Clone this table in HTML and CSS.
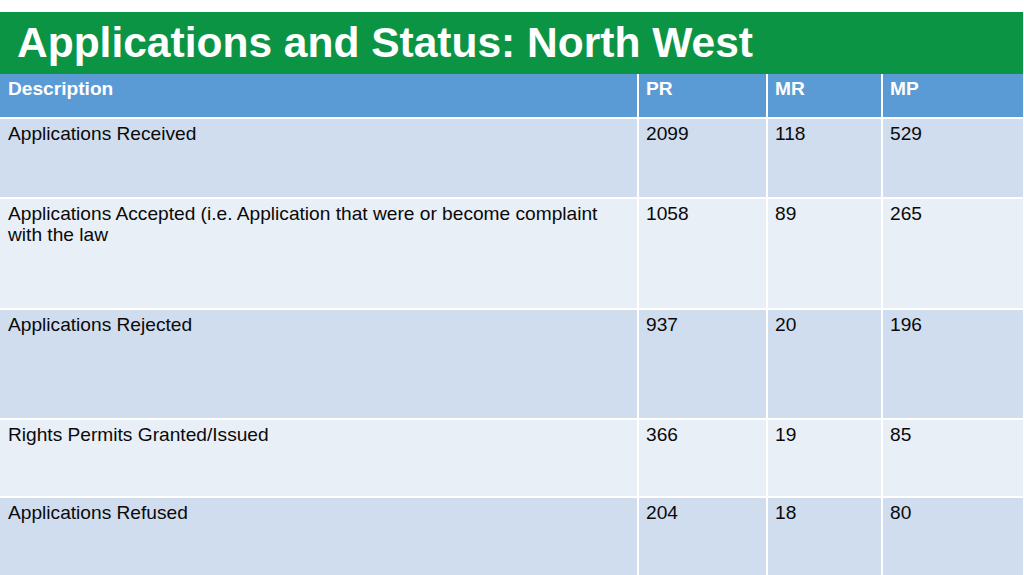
FILE: index.html
```html
<!DOCTYPE html>
<html>
<head>
<meta charset="utf-8">
<link rel="stylesheet" href="styles.css">
</head>
<body>
<div class="slide">
  <h1 class="title">Applications and Status: North West</h1>
  <table class="data">
    <colgroup>
      <col class="c-desc"><col class="c-pr"><col class="c-mr"><col class="c-mp">
    </colgroup>
    <thead>
      <tr class="head"><th>Description</th><th>PR</th><th>MR</th><th>MP</th></tr>
    </thead>
    <tbody>
      <tr class="r1 odd"><td>Applications Received</td><td>2099</td><td>118</td><td>529</td></tr>
      <tr class="r2 even"><td>Applications Accepted (i.e. Application that were or become complaint with the law</td><td>1058</td><td>89</td><td>265</td></tr>
      <tr class="r3 odd"><td>Applications Rejected</td><td>937</td><td>20</td><td>196</td></tr>
      <tr class="r4 even"><td>Rights Permits Granted/Issued</td><td>366</td><td>19</td><td>85</td></tr>
      <tr class="r5 odd"><td>Applications Refused</td><td>204</td><td>18</td><td>80</td></tr>
    </tbody>
  </table>
</div>
</body>
</html>
```
FILE: styles.css
```css
html, body {
  margin: 0;
  padding: 0;
  background: #ffffff;
}
body {
  font-family: "Liberation Sans", Arial, sans-serif;
  width: 1024px;
  height: 575px;
  overflow: hidden;
}
.slide {
  padding-top: 12px;
  width: 1023px;
}
.title {
  margin: 0;
  height: 62px;
  background: #0c9445;
  color: #ffffff;
  font-size: 42.5px;
  font-weight: bold;
  line-height: 62px;
  padding-left: 17px;
  box-sizing: border-box;
  white-space: nowrap;
}
.data {
  width: 1023px;
  table-layout: fixed;
  border-collapse: separate;
  border-spacing: 0;
}
.c-desc { width: 639px; }
.c-pr { width: 129px; }
.c-mr { width: 115px; }
.c-mp { width: 140px; }
.data th, .data td {
  box-sizing: border-box;
  vertical-align: top;
  text-align: left;
  font-size: 19.15px;
  line-height: 21px;
  padding: 4px 8px 0 7px;
  border-right: 2px solid #ffffff;
  border-bottom: 2px solid #ffffff;
  color: #0a0a0a;
}
.data th:first-child, .data td:first-child {
  padding-left: 8px;
}
.data th:last-child, .data td:last-child {
  border-right: none;
}
.head th {
  background: #5b9bd5;
  color: #ffffff;
  font-weight: bold;
  height: 45px;
}
.odd td { background: #d0ddee; }
.even td { background: #e9eff7; }
.r1 td { height: 80px; }
.r2 td { height: 111px; }
.r3 td { height: 110px; }
.r4 td { height: 78px; }
.r5 td { height: 79px; }
```
